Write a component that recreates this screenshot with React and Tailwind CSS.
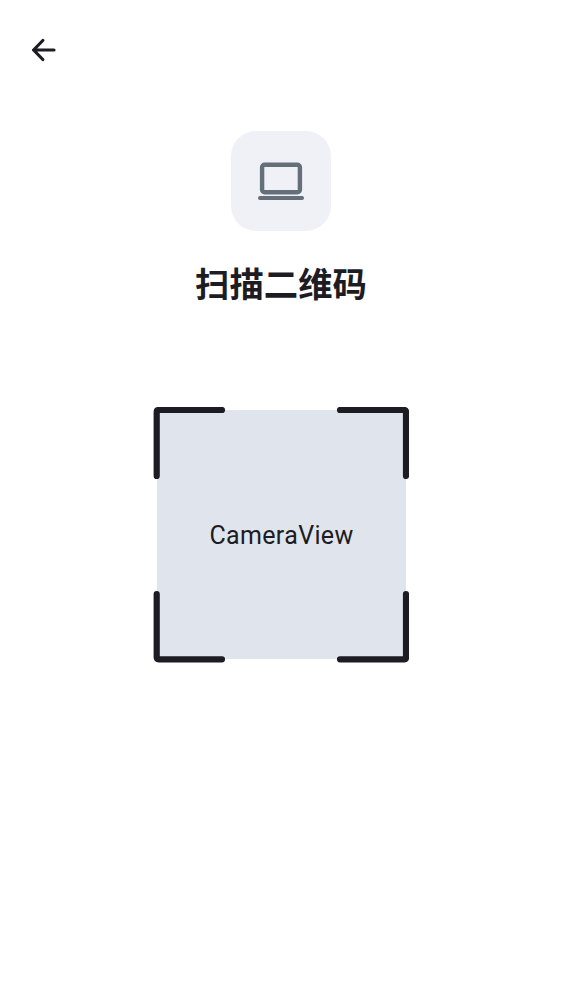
function BackArrow() {
  return (
    <svg className="block h-6 w-6" viewBox="0 0 24 24" fill="none" stroke="#1c1c22" strokeWidth="3.2" strokeLinecap="round" strokeLinejoin="round">
      <path d="M22 12H2M10.8 2.5 1.6 12l9.2 9.5" />
    </svg>
  );
}

function LaptopIcon() {
  return (
    <svg className="block h-10 w-[46px]" viewBox="0 0 46 40" fill="none" stroke="#656f79" strokeWidth="4.4" strokeLinecap="round">
      <rect x="4.1" y="3.8" width="37.8" height="27.4" rx="2.5" />
      <path d="M2 37H44" strokeWidth="4" />
    </svg>
  );
}

function ScanFrame() {
  return (
    <svg className="absolute inset-0 h-full w-full" viewBox="0 0 256 256" fill="none" stroke="#1c1c22" strokeWidth="6.2" strokeLinecap="round" strokeLinejoin="round">
      <path d="M3.7 69V5q0-2 2-2H69M187 3h64q2 0 2 2v64M253 187v63.3q0 2-2 2h-64M69 252.3H5.7q-2 0-2-2V187" />
    </svg>
  );
}

export default function App() {
  return (
    <main className="flex h-[1000px] w-[562px] flex-col items-center bg-white text-[#1c1c22]">
      <header className="flex h-[100px] w-full items-center pl-8">
        <button aria-label="返回">
          <BackArrow />
        </button>
      </header>
      <div className="mt-[31px] flex h-[100px] w-[100px] shrink-0 items-center justify-center rounded-[25px] bg-[#f0f1f6]">
        <LaptopIcon />
      </div>
      <h1 className="mt-7 h-[46px] text-[34.375px] leading-[46px] font-bold font-['Noto_Sans_CJK_SC',sans-serif]">
        扫描二维码
      </h1>
      <section className="relative mt-[102px] flex h-64 w-64 shrink-0 pt-[3px] pr-[3px] pb-1 pl-1">
        <div className="flex flex-1 items-center justify-center bg-[#e0e5ed]">
          <span className="pt-0.5 text-[25px] leading-[38px] font-normal tracking-[0.35px] font-[Roboto,sans-serif]">
            CameraView
          </span>
        </div>
        <ScanFrame />
      </section>
    </main>
  );
}
